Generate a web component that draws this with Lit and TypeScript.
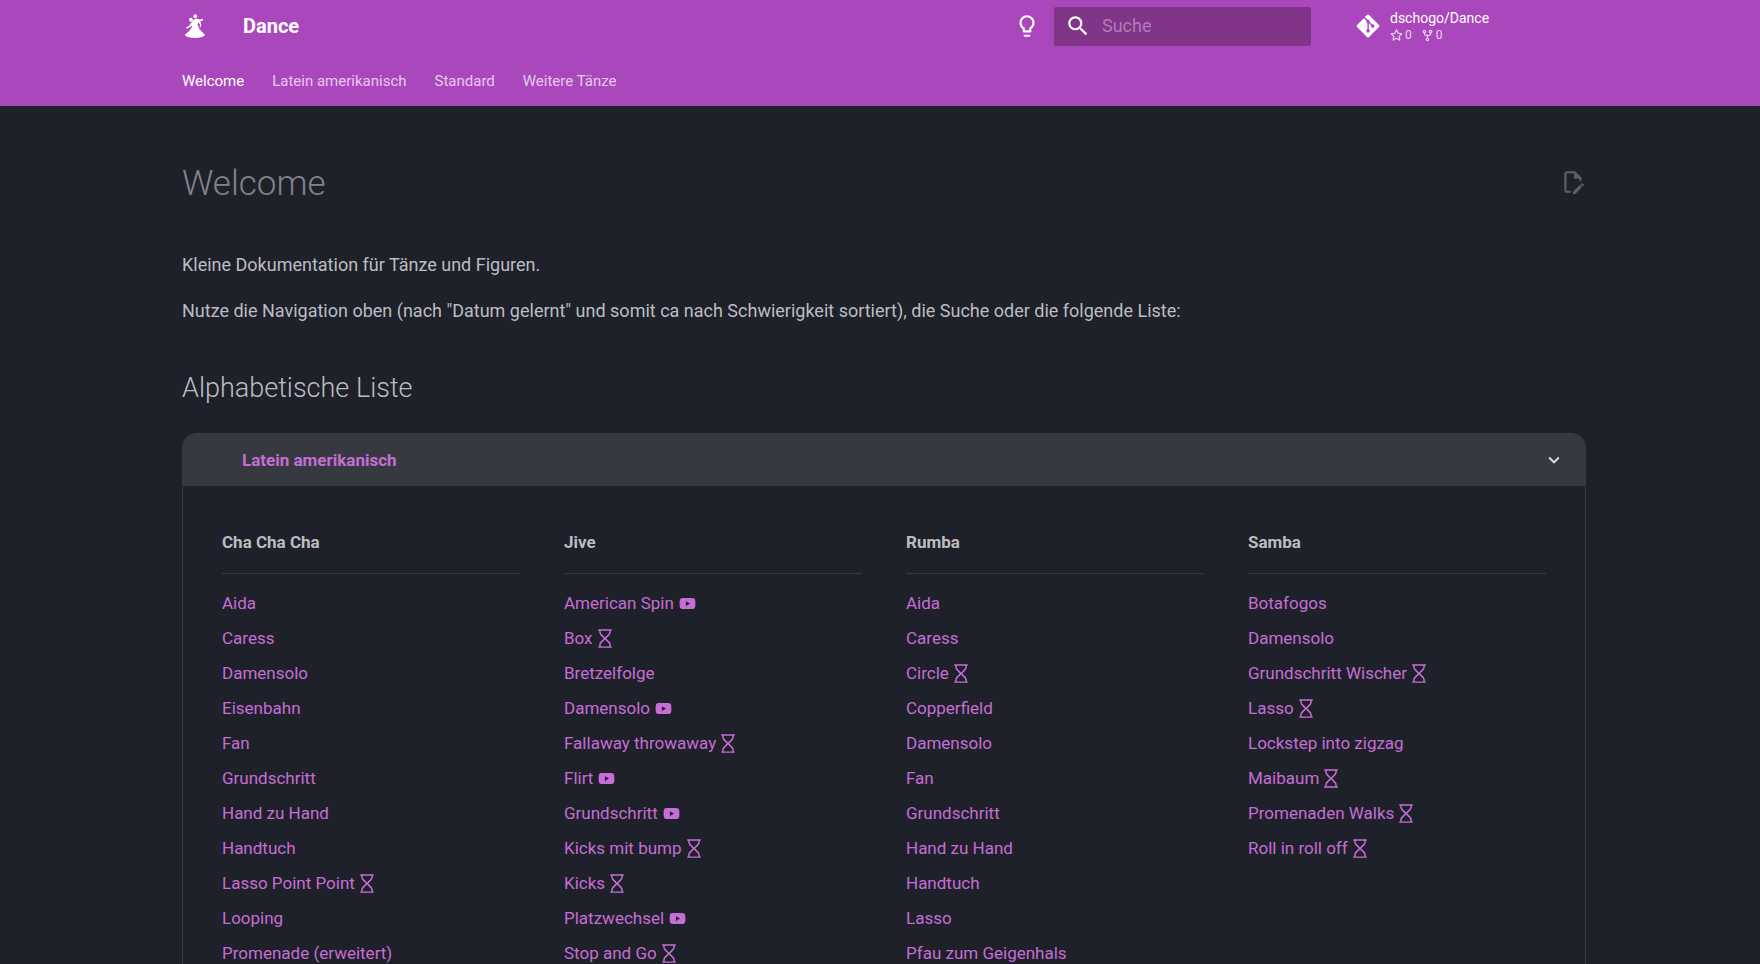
import { LitElement, html, css, svg, nothing } from "lit";
import { customElement, property } from "lit/decorators.js";

type Kind = "video" | "todo" | undefined;
type Entry = [name: string, kind?: Kind];
interface Column {
  title: string;
  entries: Entry[];
}

const COLUMNS: Column[] = [
  {
    title: "Cha Cha Cha",
    entries: [
      ["Aida"], ["Caress"], ["Damensolo"], ["Eisenbahn"], ["Fan"], ["Grundschritt"],
      ["Hand zu Hand"], ["Handtuch"], ["Lasso Point Point", "todo"], ["Looping"],
      ["Promenade (erweitert)"],
    ],
  },
  {
    title: "Jive",
    entries: [
      ["American Spin", "video"], ["Box", "todo"], ["Bretzelfolge"], ["Damensolo", "video"],
      ["Fallaway throwaway", "todo"], ["Flirt", "video"], ["Grundschritt", "video"],
      ["Kicks mit bump", "todo"], ["Kicks", "todo"], ["Platzwechsel", "video"],
      ["Stop and Go", "todo"],
    ],
  },
  {
    title: "Rumba",
    entries: [
      ["Aida"], ["Caress"], ["Circle", "todo"], ["Copperfield"], ["Damensolo"], ["Fan"],
      ["Grundschritt"], ["Hand zu Hand"], ["Handtuch"], ["Lasso"], ["Pfau zum Geigenhals"],
    ],
  },
  {
    title: "Samba",
    entries: [
      ["Botafogos"], ["Damensolo"], ["Grundschritt Wischer", "todo"], ["Lasso", "todo"],
      ["Lockstep into zigzag"], ["Maibaum", "todo"], ["Promenaden Walks", "todo"],
      ["Roll in roll off", "todo"],
    ],
  },
];

const TABS = ["Welcome", "Latein amerikanisch", "Standard", "Weitere Tänze"];

const ICONS = {
  logo: {
    box: "0 0 24 24",
    art: svg`<circle cx="12.2" cy="2.9" r="1.7"/><circle cx="8.2" cy="6.2" r="1.8"/>
      <path d="M10.6 6.2 13 5l3.4.9 2.9-.6.2 1.3-2.7 1.3 1 2.9-.7 2.4-.9-.2.4-2.4-1.3-1.8-1 1.6 1.1 3.1c1.6 2.4 3.8 4.600 6 6.700-1.700 1.700-5 2.800-9.400 2.800s-7.800-1.100-9.500-2.800c2.400-2 4.800-4.200 6.400-6.700l.6-2.600-1.400 1.800-3.900 1.900-.5-1 3.200-2 1.500-2.700z"/>`,
  },
  bulb: {
    box: "0 0 24 24",
    art: svg`<path d="M12 2a7 7 0 0 1 7 7c0 2.380-1.190 4.470-3 5.740V17a1 1 0 0 1-1 1H9a1 1 0 0 1-1-1v-2.260C6.190 13.470 5 11.380 5 9a7 7 0 0 1 7-7M9 21v-1h6v1a1 1 0 0 1-1 1h-4a1 1 0 0 1-1-1m3-17a5 5 0 0 0-5 5c0 2.050 1.230 3.810 3 4.580V16h4v-2.420c1.770-.77 3-2.530 3-4.580a5 5 0 0 0-5-5Z"/>`,
  },
  search: {
    box: "0 0 24 24",
    art: svg`<path d="M9.500 3A6.500 6.500 0 0 1 16 9.500c0 1.610-.59 3.090-1.560 4.230l.27.27h.79l5 5-1.500 1.500-5-5v-.79l-.27-.27A6.516 6.516 0 0 1 9.500 16 6.500 6.500 0 0 1 3 9.500 6.500 6.500 0 0 1 9.500 3m0 2C7 5 5 7 5 9.500S7 14 9.500 14 14 12 14 9.500 12 5 9.500 5Z"/>`,
  },
  git: {
    box: "0 0 448 512",
    art: svg`<path d="M439.550 236.050 244 40.450a28.870 28.870 0 0 0-40.810 0l-40.660 40.630 51.520 51.520c27.060-9.140 52.680 16.770 43.390 43.680l49.660 49.660c34.230-11.800 61.180 31 35.470 56.690-26.490 26.490-70.210-2.870-56-37.340L240.220 199v121.850c25.300 12.540 22.260 41.850 9.080 55a34.340 34.340 0 0 1-48.550 0c-17.570-17.600-11.070-46.910 11.250-56v-123c-20.800-8.510-24.600-30.740-18.640-45L142.570 101 8.450 235.140a28.860 28.860 0 0 0 0 40.810l195.610 195.600a28.860 28.860 0 0 0 40.800 0l194.690-194.690a28.860 28.860 0 0 0 0-40.810z"/>`,
  },
  star: {
    box: "0 0 16 16",
    art: svg`<path d="M8 .25a.75.75 0 0 1 .673.418l1.882 3.815 4.210.612a.75.75 0 0 1 .416 1.279l-3.046 2.970.719 4.192a.751.751 0 0 1-1.088.791L8 12.347l-3.766 1.980a.75.75 0 0 1-1.088-.79l.72-4.194L.818 6.374a.75.75 0 0 1 .416-1.280l4.210-.611L7.327.668A.75.75 0 0 1 8 .25Zm0 2.445L6.615 5.500a.75.75 0 0 1-.564.410l-3.097.450 2.240 2.184a.75.75 0 0 1 .216.664l-.528 3.084 2.769-1.456a.75.75 0 0 1 .698 0l2.770 1.456-.530-3.084a.75.75 0 0 1 .216-.664l2.240-2.183-3.096-.450a.75.75 0 0 1-.564-.410L8 2.694Z"/>`,
  },
  fork: {
    box: "0 0 16 16",
    art: svg`<path d="M5 5.372v.878c0 .414.336.75.75.75h4.500a.75.75 0 0 0 .75-.75v-.878a2.250 2.250 0 1 1 1.500 0v.878a2.250 2.250 0 0 1-2.250 2.250h-1.500v2.128a2.251 2.251 0 1 1-1.500 0V8.500h-1.500A2.250 2.250 0 0 1 3.500 6.250v-.878a2.250 2.250 0 1 1 1.500 0ZM5 3.250a.75.75 0 1 0-1.500 0 .75.75 0 0 0 1.500 0Zm6.750.750a.75.75 0 1 0 0-1.500.75.75 0 0 0 0 1.500Zm-3 8.750a.75.75 0 1 0-1.500 0 .75.75 0 0 0 1.500 0Z"/>`,
  },
  edit: {
    box: "0 0 24 24",
    art: svg`<path d="M10 20H6V4h7v5h5v3.100l2-2V8l-6-6H6c-1.100 0-2 .9-2 2v16c0 1.100.9 2 2 2h4v-2m10.200-7c.1 0 .3.1.4.2l1.300 1.300c.2.2.2.6 0 .8l-1 1-2.100-2.100 1-1c.1-.1.2-.2.4-.2m0 3.900L14.100 23H12v-2.100l6.100-6.100 2.100 2.100Z"/>`,
  },
  chevron: {
    box: "0 0 24 24",
    art: svg`<path d="M7.410 8.580 12 13.170l4.590-4.590L18 10l-6 6-6-6 1.410-1.420Z"/>`,
  },
  video: {
    box: "0 0 24 24",
    art: svg`<path d="m10 15 5.190-3L10 9v6m11.560-7.830c.13.470.22 1.100.28 1.900.07.800.1 1.490.1 2.090L22 12c0 2.190-.16 3.800-.44 4.830-.25.900-.83 1.480-1.730 1.730-.47.130-1.330.220-2.650.280-1.300.070-2.490.100-3.590.100L12 19c-4.190 0-6.800-.16-7.830-.44-.9-.25-1.480-.83-1.730-1.730-.13-.47-.22-1.100-.28-1.900-.07-.8-.1-1.490-.1-2.090L2 12c0-2.190.16-3.800.44-4.830.25-.9.83-1.480 1.730-1.730.47-.13 1.330-.22 2.650-.28 1.300-.07 2.490-.1 3.590-.1L12 5c4.190 0 6.800.16 7.830.44.9.25 1.480.83 1.730 1.730Z"/>`,
  },
  todo: {
    box: "0 0 384 512",
    art: svg`<path d="M0 20C0 8 8 0 20 0h344c12 0 20 8 20 20s-8 20-20 20h-12v27c0 40-16 79-44 107l-82 82 82 82c28 28 44 67 44 107v27h12c12 0 20 8 20 20s-8 20-20 20H20c-12 0-20-8-20-20s8-20 20-20h12v-27c0-40 16-79 44-107l82-82-82-82C48 146 32 107 32 67V40H20C8 40 0 32 0 20zm192 266-86 84c-19 19-34 47-34 75v27h240v-27c0-28-15-56-34-75l-86-84zm0-60 86-84c19-19 34-47 34-75V40H72v27c0 28 15 56 34 75l86 84z"/>`,
  },
};

@customElement("dance-icon")
export class DanceIcon extends LitElement {
  @property() name: keyof typeof ICONS = "logo";

  static styles = css`
    :host {
      display: inline-flex;
      flex: none;
    }
    svg {
      display: block;
      width: 100%;
      height: 100%;
      fill: currentColor;
    }
  `;

  render() {
    const icon = ICONS[this.name];
    return html`<svg viewBox=${icon.box} aria-hidden="true">${icon.art}</svg>`;
  }
}

@customElement("app-root")
export class AppRoot extends LitElement {
  static styles = css`
    :host {
      display: block;
      height: 100vh;
      overflow: hidden;
      background: #1e2129;
      color: #bcbdc1;
      font-family: Roboto, "Liberation Sans", sans-serif;
      font-size: 18px;
      line-height: 28px;
    }
    * {
      box-sizing: border-box;
    }
    a {
      color: inherit;
      text-decoration: none;
    }
    .top {
      background: #ab47bd;
      color: #fff;
    }
    .grid {
      max-width: 1452px;
      margin: 0 auto;
    }
    .bar {
      display: flex;
      align-items: center;
      height: 52px;
      padding: 0 4px 0 28px;
    }
    .logo {
      display: flex;
      margin-right: 35px;
    }
    .logo dance-icon,
    .bulb dance-icon,
    .search dance-icon {
      width: 26px;
      height: 26px;
    }
    .site {
      flex: 1;
      font-size: 20px;
      font-weight: 700;
    }
    .bulb {
      display: flex;
      margin: 0 14px 0 0;
      padding: 0;
      border: 0;
      background: none;
      color: inherit;
    }
    .search {
      display: flex;
      align-items: center;
      gap: 11px;
      width: 257px;
      height: 39px;
      padding: 0 11px;
      border-radius: 2px;
      background: #803589;
    }
    .query {
      flex: 1;
      min-width: 0;
      padding: 0;
      border: 0;
      outline: 0;
      background: none;
      color: #fff;
      font: inherit;
    }
    .query::placeholder {
      color: #b27bb8;
      opacity: 1;
    }
    .source {
      display: flex;
      align-items: center;
      gap: 9px;
      width: 247px;
      margin-left: 44px;
    }
    .source .git {
      width: 26px;
      height: 26px;
    }
    .repo {
      display: block;
      font-size: 14px;
      line-height: 18px;
    }
    .facts {
      display: flex;
      gap: 9px;
      margin: 0;
      padding: 0;
      list-style: none;
      font-size: 12px;
      line-height: 16px;
      opacity: 0.75;
    }
    .facts li {
      display: flex;
      align-items: center;
      gap: 2px;
    }
    .facts dance-icon {
      width: 13px;
      height: 13px;
    }
    .tabs {
      display: flex;
      gap: 28px;
      height: 54px;
      margin: 0 auto;
      padding: 17px 28px 0;
      list-style: none;
      font-size: 15px;
      line-height: 24px;
    }
    .tab {
      opacity: 0.7;
    }
    .tab.active {
      opacity: 1;
    }
    .page {
      padding: 53px 20px 0 28px;
    }
    .heading {
      display: flex;
      align-items: flex-start;
      justify-content: space-between;
      margin-bottom: 42px;
    }
    h1 {
      margin: 0;
      color: #81838a;
      font-size: 35px;
      font-weight: 300;
      line-height: 50px;
    }
    .edit {
      display: flex;
      padding-top: 10px;
      color: #5c5f67;
    }
    .edit dance-icon {
      width: 26px;
      height: 26px;
    }
    p {
      margin: 0 0 18px;
    }
    h2 {
      margin: 43px 0 25px;
      font-size: 27px;
      font-weight: 300;
      line-height: 40px;
    }
    .panel {
      border: 1px solid #363940;
      border-radius: 14px;
      font-size: 17px;
    }
    summary {
      display: flex;
      align-items: center;
      justify-content: space-between;
      height: 52px;
      padding: 0 20px 0 59px;
      border-radius: 12px 12px 0 0;
      background: #363940;
      color: #c66dd6;
      font-weight: 700;
      list-style: none;
      cursor: pointer;
    }
    summary dance-icon {
      width: 22px;
      height: 22px;
      color: #dddde0;
    }
    .columns {
      display: grid;
      grid-template-columns: repeat(4, 1fr);
      gap: 44px;
      padding: 42px 39px;
    }
    h3 {
      margin: 0;
      padding-bottom: 17px;
      border-bottom: 1px solid #363940;
      font-size: 17px;
      font-weight: 700;
      line-height: 28px;
    }
    .figures {
      margin: 0;
      padding: 12px 0 0;
      list-style: none;
      color: #c66dd6;
      line-height: 35px;
    }
    .figure {
      display: inline-flex;
      align-items: center;
      gap: 4px;
    }
    .video {
      width: 19px;
      height: 19px;
    }
    .todo {
      width: 14px;
      height: 19px;
      margin-left: 1px;
    }
  `;

  private entry([name, kind]: Entry) {
    return html`<li>
      <a class="figure" href="#">
        ${name}${kind ? html`<dance-icon class=${kind} name=${kind}></dance-icon>` : nothing}
      </a>
    </li>`;
  }

  render() {
    return html`
      <header class="top">
        <div class="bar grid">
          <a class="logo" href="#" aria-label="Dance"><dance-icon name="logo"></dance-icon></a>
          <span class="site">Dance</span>
          <button class="bulb" type="button" aria-label="Farbschema"><dance-icon name="bulb"></dance-icon></button>
          <label class="search">
            <dance-icon name="search"></dance-icon>
            <input class="query" type="text" placeholder="Suche" aria-label="Suche" />
          </label>
          <a class="source" href="#">
            <dance-icon class="git" name="git"></dance-icon>
            <div>
              <span class="repo">dschogo/Dance</span>
              <ul class="facts">
                <li><dance-icon name="star"></dance-icon>0</li>
                <li><dance-icon name="fork"></dance-icon>0</li>
              </ul>
            </div>
          </a>
        </div>
        <nav>
          <ul class="tabs grid">
            ${TABS.map((t, i) => html`<li><a class="tab ${i === 0 ? "active" : ""}" href="#">${t}</a></li>`)}
          </ul>
        </nav>
      </header>
      <main class="page grid">
        <div class="heading">
          <h1>Welcome</h1>
          <a class="edit" href="#" aria-label="Seite editieren"><dance-icon name="edit"></dance-icon></a>
        </div>
        <p>Kleine Dokumentation für Tänze und Figuren.</p>
        <p>Nutze die Navigation oben (nach "Datum gelernt" und somit ca nach Schwierigkeit sortiert), die Suche oder die folgende Liste:</p>
        <h2>Alphabetische Liste</h2>
        <details class="panel" open>
          <summary>Latein amerikanisch<dance-icon name="chevron"></dance-icon></summary>
          <div class="columns">
            ${COLUMNS.map(
              (c) => html`<section>
                <h3>${c.title}</h3>
                <ul class="figures">${c.entries.map((e) => this.entry(e))}</ul>
              </section>`
            )}
          </div>
        </details>
      </main>
    `;
  }
}
